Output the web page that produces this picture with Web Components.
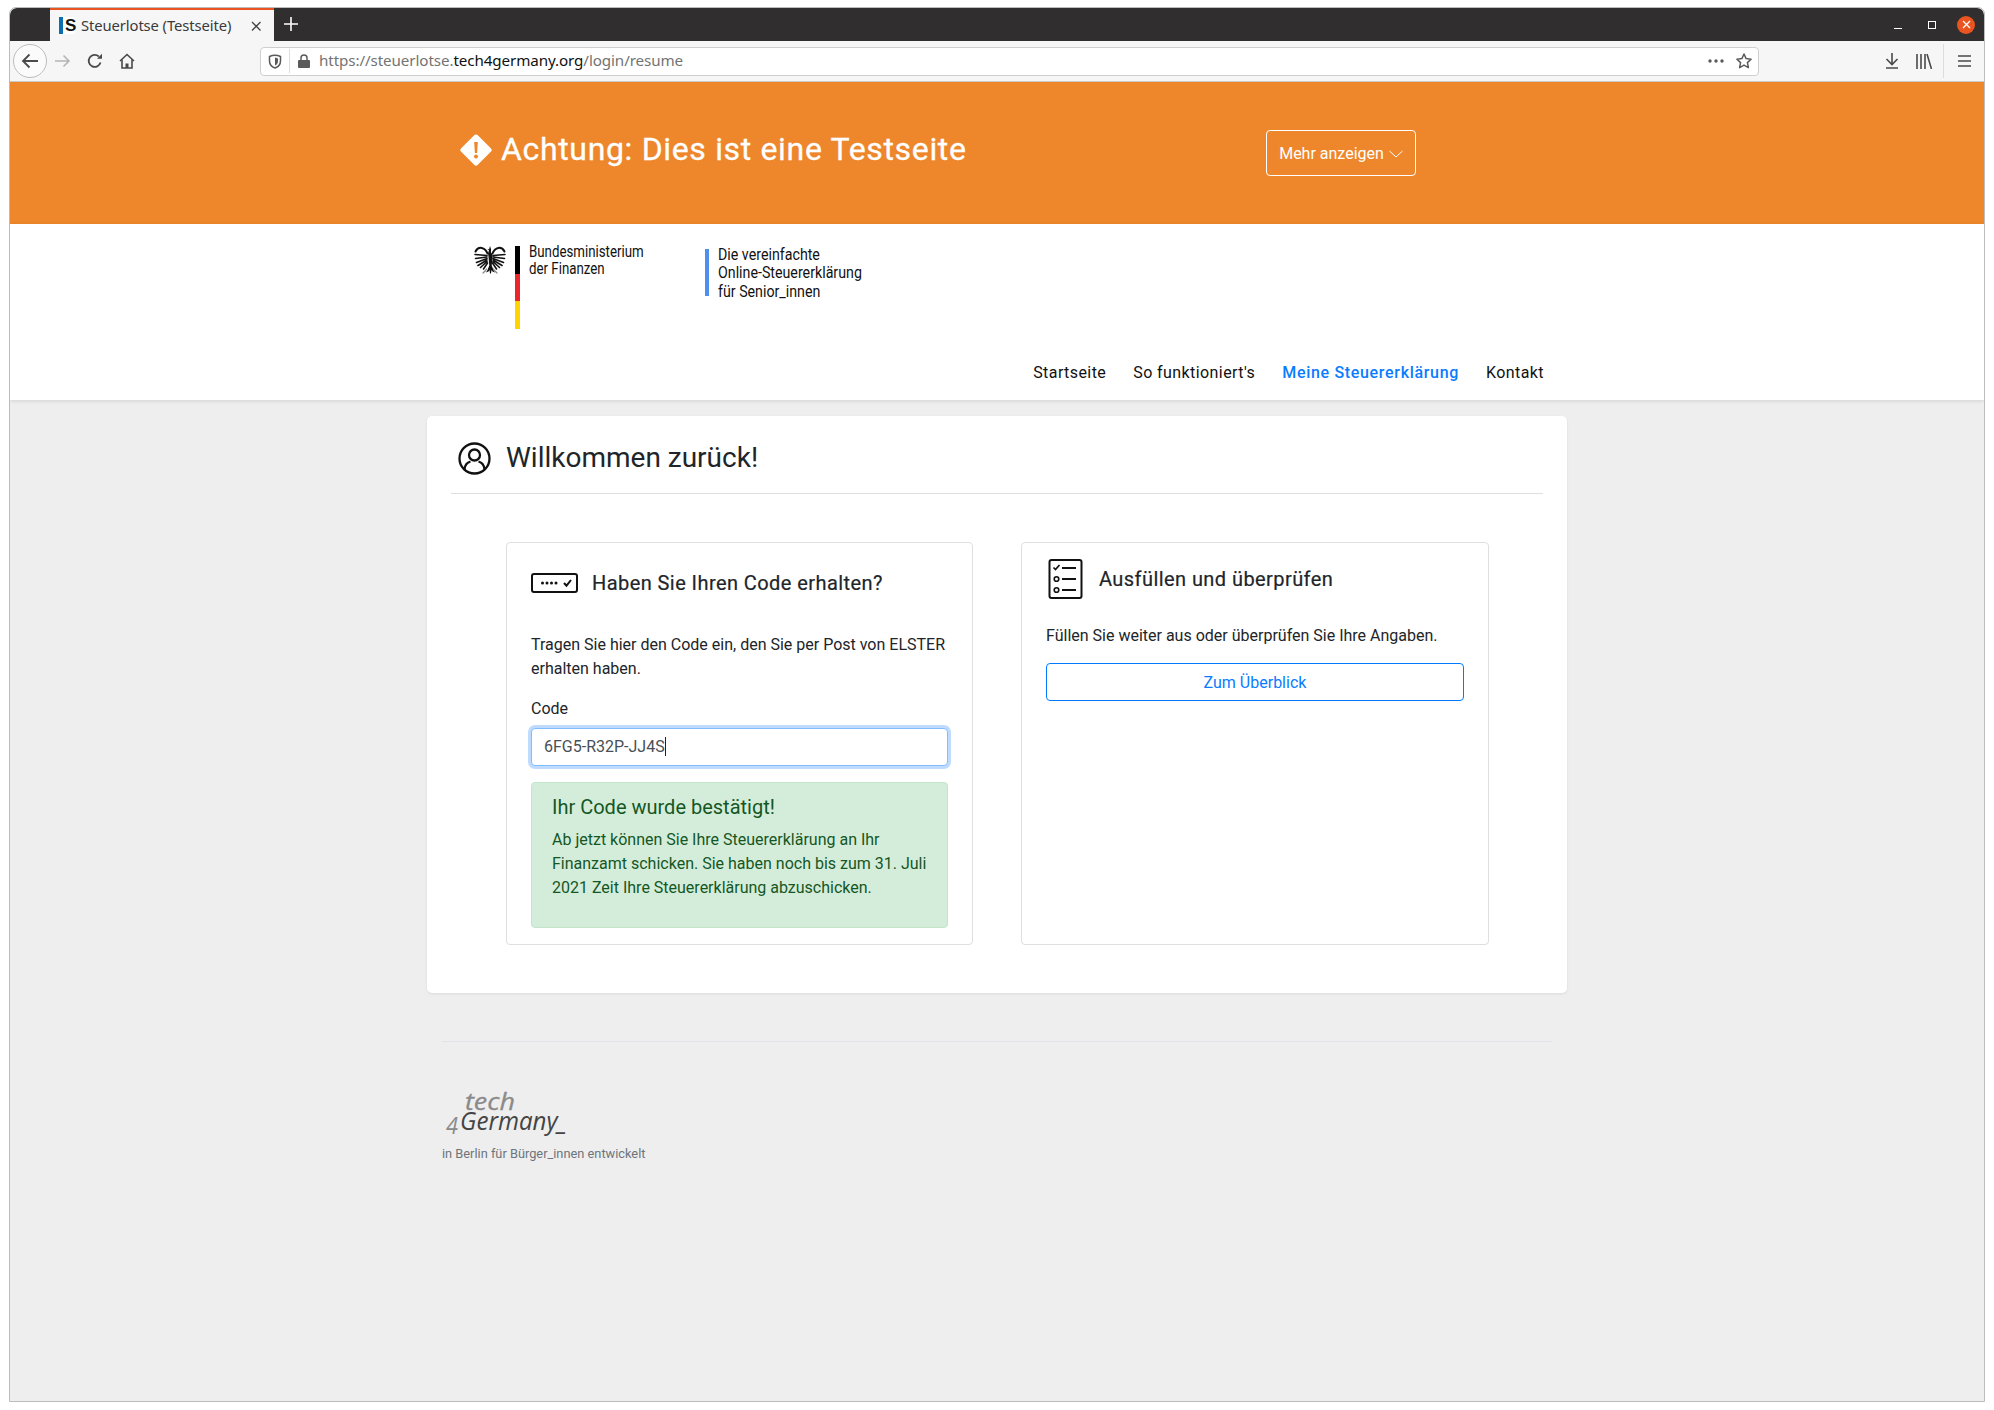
<!DOCTYPE html>
<html lang="de">
<head>
<meta charset="utf-8">
<title>Steuerlotse (Testseite)</title>
<style>
  html, body { margin: 0; background: #fff; }
  body { font-family: Roboto, "Liberation Sans", sans-serif; font-size: 16px; color: #212529; }
</style>
</head>
<body>

<browser-window>
  <test-banner></test-banner>
  <site-header></site-header>
  <welcome-card>
    <code-card></code-card>
    <review-card></review-card>
  </welcome-card>
  <site-footer></site-footer>
</browser-window>

<script>
// small helper: every element gets an open shadow root from its html
class ShadowEl extends HTMLElement {
  constructor() {
    super();
    this.attachShadow({ mode: 'open' }).innerHTML = this.constructor.html;
  }
}

// ---- browser chrome ----
class BrowserTabs extends ShadowEl {
  static html = `
    <style>
      :host { display: flex; height: 33px; background: #302e2e; padding-left: 40px; border-radius: 7px 7px 0 0; }
      .tab { width: 224px; box-sizing: border-box; background: #f6f6f6; border-top: 2px solid #e95420; display: flex; align-items: center; padding-left: 9px; color: #3a3a3a; font: 14.8px/1 "Noto Sans", sans-serif; }
      .fav { width: 16px; height: 17px; display: flex; background: #fff; margin-right: 6px; flex: none; font: 700 17px/17px "Liberation Sans", sans-serif; color: #111; }
      .fav i { width: 4px; height: 17px; background: #0a6eb0; margin-right: 2px; flex: none; }
      .title { width: 169px; flex: none; white-space: nowrap; letter-spacing: -.1px; }
      .x { width: 12px; height: 12px; flex: none; }
      .plus { margin: 9px 0 0 10px; width: 14px; height: 14px; }
      .win { margin-left: auto; display: flex; align-items: center; gap: 0; color: #fff; }
      .btn { width: 34px; height: 33px; display: flex; align-items: center; justify-content: center; }
      .close { width: 18px; height: 18px; border-radius: 50%; background: #e95420; display: flex; align-items: center; justify-content: center; margin: 0 9px 0 8px; }
    </style>
    <div class="tab">
      <span class="fav"><i></i>S</span>
      <span class="title">Steuerlotse (Testseite)</span>
      <svg class="x" viewBox="0 0 12 12" stroke="#444" stroke-width="1.3" fill="none"><path d="M2 2l8.5 8.5M10.5 2L2 10.5"/></svg>
    </div>
    <svg class="plus" viewBox="0 0 14 14" stroke="#fff" stroke-width="1.6" fill="none"><path d="M7 0v14M0 7h14"/></svg>
    <div class="win">
      <span class="btn"><svg width="8" height="8" viewBox="0 0 8 8" stroke="#fff" fill="none"><path d="M0 7.5h8"/></svg></span>
      <span class="btn"><svg width="8" height="8" viewBox="0 0 8 8" stroke="#fff" fill="none"><rect x=".5" y=".5" width="7" height="7"/></svg></span>
      <span class="close"><svg width="9" height="9" viewBox="0 0 9 9" stroke="#fff" stroke-width="1.3" fill="none"><path d="M1 1l7 7M8 1L1 8"/></svg></span>
    </div>
  `;
}
customElements.define('browser-tabs', BrowserTabs);

class BrowserToolbar extends ShadowEl {
  static html = `
    <style>
      :host { display: flex; align-items: center; height: 41px; background: #f6f6f6; border-bottom: 1px solid #c9c9c9; box-sizing: border-box; position: relative; }
      svg { display: block; flex: none; }
      .back { width: 34px; height: 34px; box-sizing: border-box; border: 1px solid #bdbdbd; border-radius: 50%; background: #fbfbfb; margin-left: 3px; display: flex; align-items: center; justify-content: center; flex: none; }
      .fwd { margin: 0 0 0 8px; }
      .reload { margin-left: 16px; }
      .home { margin-left: 16px; }
      .url { width: 1499px; height: 29px; box-sizing: border-box; margin-left: 125px; background: #fff; border: 1px solid #cfcfcf; border-radius: 4px; display: flex; align-items: center; padding-left: 7px; font: 15.2px/1 "Noto Sans", sans-serif; color: #737373; }
      .url .sep { width: 1px; height: 24px; background: #ddd; margin: 0 8px 0 7px; }
      .url .txt { margin-left: 9px; white-space: nowrap; letter-spacing: -.1px; }
      .url b { font-weight: 400; color: #111; }
      .dots { margin-left: auto; margin-right: 12px; }
      .star { margin-right: 6px; }
      .dl { margin-left: 126px; }
      .lib { margin-left: 17px; }
      .tsep { width: 1px; height: 34px; background: #ddd; margin-left: 11px; flex: none; }
      .ham { margin-left: 14px; }
    </style>
    <span class="back"><svg width="18" height="16" viewBox="0 0 18 16" fill="none" stroke="#4a4a4a" stroke-width="1.8"><path d="M17 8H2M8.5 1.5L2 8l6.5 6.5"/></svg></span>
    <svg class="fwd" width="16" height="14" viewBox="0 0 16 14" fill="none" stroke="#b5b5b5" stroke-width="1.6"><path d="M0 7h14M8.5 1.5L14 7l-5.500 5.500"/></svg>
    <svg class="reload" width="16" height="16" viewBox="0 0 16 16" fill="none" stroke="#4a4a4a" stroke-width="1.8"><path d="M13.500 9.500A6 6 0 1 1 11.800 3.500"/><path d="M10 5.800h5V.8z" fill="#4a4a4a" stroke="none"/></svg>
    <svg class="home" width="16" height="16" viewBox="0 0 16 16" fill="none" stroke="#4a4a4a" stroke-width="1.6"><path d="M1 8l7-6.500L15 8"/><path d="M3 6.500V15h10V6.500"/><path d="M6.500 15v-4.500h3V15" fill="#4a4a4a" stroke="none"/></svg>
    <div class="url">
      <svg width="14" height="15" viewBox="0 0 14 15" fill="none" stroke="#5a5a5a" stroke-width="1.500"><path d="M1.500 2.500Q7 .2 12.500 2.500V7q0 5-5.500 7Q1.500 12 1.500 7z"/><path d="M7 3.500Q9 3.800 10 4.500V7q0 3-3 4.500z" fill="#5a5a5a" stroke="none"/></svg>
      <span class="sep"></span>
      <svg width="12" height="14" viewBox="0 0 12 14" fill="#5a5a5a"><path d="M1 6h10a1 1 0 0 1 1 1v6a1 1 0 0 1-1 1H1a1 1 0 0 1-1-1V7a1 1 0 0 1 1-1z"/><path d="M3 6V4a3 3 0 0 1 6 0v2" fill="none" stroke="#5a5a5a" stroke-width="1.500"/></svg>
      <span class="txt">https://steuerlotse.<b>tech4germany.org</b>/login/resume</span>
      <svg class="dots" width="16" height="4" viewBox="0 0 16 4" fill="#5a5a5a"><circle cx="2" cy="2" r="1.700"/><circle cx="8" cy="2" r="1.700"/><circle cx="14" cy="2" r="1.700"/></svg>
      <svg class="star" width="16" height="16" viewBox="0 0 16 16" fill="none" stroke="#5a5a5a" stroke-width="1.500" stroke-linejoin="round"><path d="M8 1l2.100 4.600 5 .6-3.700 3.400 1 5L8 12.100 3.600 14.600l1-5L.9 6.200l5-.6z"/></svg>
    </div>
    <svg class="dl" width="14" height="16" viewBox="0 0 14 16" fill="none" stroke="#4a4a4a" stroke-width="1.600"><path d="M7 0v11M1.500 6L7 11.500 12.500 6M1 15h12"/></svg>
    <svg class="lib" width="16" height="15" viewBox="0 0 16 15" fill="none" stroke="#4a4a4a" stroke-width="1.600"><path d="M1 0v15M5 0v15M9 0v15M11 0l4.500 15"/></svg>
    <span class="tsep"></span>
    <svg class="ham" width="13" height="12" viewBox="0 0 13 12" stroke="#4a4a4a" stroke-width="1.600"><path d="M0 1h13M0 6h13M0 11h13"/></svg>
  `;
}
customElements.define('browser-toolbar', BrowserToolbar);

class BrowserWindow extends ShadowEl {
  static html = `
    <style>
      :host { display: flex; flex-direction: column; box-sizing: border-box; margin: 7px 9px 0 9px; height: 1395px; background: #eee; border: 1px solid #bcbcbc; border-radius: 7px 7px 0 0; overflow: hidden; }
    </style>
    <browser-tabs></browser-tabs>
    <browser-toolbar></browser-toolbar>
    <slot></slot>
  `;
}

// ---- page ----
class TestBanner extends ShadowEl {
  static html = `
    <style>
      :host { display: block; height: 142px; background: #ee872b; color: #fff; }
      .wrap { width: 1140px; margin: 0 auto; display: flex; align-items: flex-start; box-sizing: border-box; padding-left: 33px; }
      svg { margin-top: 52px; flex: none; }
      h1 { margin: 43px 0 0 9px; font: 400 32px/48px Roboto, sans-serif; letter-spacing: .66px; -webkit-text-stroke: .3px #fff; width: 765px; white-space: nowrap; }
      button { margin-top: 48px; width: 150px; height: 46px; box-sizing: border-box; background: transparent; border: 1px solid #fff; border-radius: 4px; color: #fff; font: 400 16px/1 Roboto, sans-serif; display: flex; align-items: center; justify-content: center; gap: 5px; padding: 2px 0 0; }
    </style>
    <div class="wrap">
      <svg width="32" height="32" viewBox="0 0 32 32"><path d="M16 0.500a2.500 2.500 0 0 1 1.800.7l13 13a2.500 2.500 0 0 1 0 3.600l-13 13a2.500 2.500 0 0 1-3.600 0l-13-13a2.500 2.500 0 0 1 0-3.600l13-13a2.500 2.500 0 0 1 1.800-.7z" fill="#fff"/><path d="M14.200 8h3.600l-.7 11h-2.200z" fill="#ee872b"/><circle cx="16" cy="22.500" r="2" fill="#ee872b"/></svg>
      <h1>Achtung: Dies ist eine Testseite</h1>
      <button>Mehr anzeigen <svg style="margin:0" width="14" height="8" viewBox="0 0 14 8" fill="none" stroke="#fff"><path d="M.5 1L7 7l6.500-6"/></svg></button>
    </div>
  `;
}

class SiteHeader extends ShadowEl {
  static html = `
    <style>
      :host { display: block; height: 176px; background: #fff; box-shadow: 0 1px 4px rgba(0,0,0,.12); position: relative; }
      .wrap { width: 1140px; margin: 0 auto; }
      .logos { display: flex; align-items: flex-start; height: 137px; padding-left: 47px; box-sizing: border-box; }
      .eagle { margin-top: 20px; flex: none; }
      .flag { width: 5px; height: 83px; margin: 22px 0 0 9px; background: linear-gradient(#000 0 33.3%, #e8262c 33.3% 66.6%, #ffd400 66.6%); flex: none; }
      .cond { font: 400 16px Roboto, sans-serif; color: #111; transform-origin: 0 0; white-space: nowrap; }
      .bmf { margin: 19px 0 0 9px; line-height: 17px; width: 176px; transform: scaleX(.83); }
      .slogan { display: flex; margin-top: 25px; }
      .slogan i { width: 4px; height: 47px; background: #4f8ff0; flex: none; }
      .slogan .cond { margin: -3px 0 0 9px; line-height: 18.400px; transform: scaleX(.889); }
      nav { display: flex; justify-content: flex-end; gap: 27px; padding-right: 23px; font-size: 16px; letter-spacing: .42px; line-height: 24px; }
      nav a { color: #111; }
      nav a.on { color: #0a7cff; font-weight: 500; letter-spacing: .68px; }
    </style>
    <div class="wrap">
      <div class="logos">
        <svg class="eagle" width="32" height="32" viewBox="0 0 32 32" fill="#111" stroke="#111">
          <path d="M14 9.500l1-3.500-1.800-.6 2-.4.8-3 1 3v3.800l1 .7.500 3-.8 9 1.800 4.500 1.500 2.500-2.500-1-1-1.500-.5 3.500h-1l-.5-3.500-1 1.500-2.500 1 1.500-2.500 1.800-4.500-.8-9z" stroke="none"/>
          <g fill="none" stroke-linecap="round">
            <path d="M13.500 9.500C11 3 4.500 1.800 1.500 7.500" stroke-width="2"/>
            <path d="M13 11.500L1 10.500M13 13L1.500 14.500M13 14.500L2.500 18.500M13 16L4 21.500M13 17.500L6.500 23.500M13.500 19L9.500 25" stroke-width="1.600"/>
            <path d="M18.500 9.500C21 3 27.500 1.800 30.500 7.500" stroke-width="2"/>
            <path d="M19 11.500L31 10.500M19 13L30.500 14.500M19 14.500L29.500 18.500M19 16L28 21.500M19 17.500L25.500 23.500M18.500 19L22.500 25" stroke-width="1.600"/>
            <path d="M11 27.500l1.500-2.500M21 27.500l-1.500-2.500M9 29l2-2M23 29l-2-2" stroke="#888" stroke-width="1.200"/>
          </g>
        </svg>
        <span class="flag"></span>
        <div class="cond bmf">Bundesministerium<br>der Finanzen</div>
        <div class="slogan"><i></i><div class="cond">Die vereinfachte<br>Online-Steuererklärung<br>für Senior_innen</div></div>
      </div>
      <nav>
        <a>Startseite</a><a>So funktioniert's</a><a class="on">Meine Steuererklärung</a><a>Kontakt</a>
      </nav>
    </div>
  `;
}

class WelcomeCard extends ShadowEl {
  static html = `
    <style>
      :host { display: block; width: 1140px; height: 577px; margin: 16px auto 0; box-sizing: border-box; background: #fff; border-radius: 5px; box-shadow: 0 1px 3px rgba(0,0,0,.08); padding: 0 24px; }
      header { display: flex; align-items: center; height: 78px; border-bottom: 1px solid #dfdfdf; padding: 7px 0 0 7px; box-sizing: border-box; }
      h2 { margin: 0 0 0 15px; font: 400 28px/34px Roboto, sans-serif; color: #212529; }
      svg { display: block; flex: none; }
      .cols { display: grid; grid-template-columns: 467px 468px; gap: 48px; padding: 48px 54px 0 55px; }
    </style>
    <header>
      <svg width="33" height="33" viewBox="0 0 33 33" fill="none" stroke="#111" stroke-width="2.300"><circle cx="16.500" cy="16.500" r="15"/><circle cx="16.500" cy="13" r="5.500"/><path d="M6.500 27.500Q7 21 12.500 19.500M26.500 27.500Q26 21 20.500 19.500"/></svg>
      <h2>Willkommen zurück!</h2>
    </header>
    <div class="cols"><slot></slot></div>
  `;
}

class SubCard extends ShadowEl {
  static html = `
    <style>
      :host { display: block; height: 403px; box-sizing: border-box; background: #fff; border: 1px solid #dfdfdf; border-radius: 4px; padding: 16px 24px 0; line-height: 24px; }
      .head { display: flex; align-items: center; }
      h3 { margin: 0; font: 400 20px/24px Roboto, sans-serif; letter-spacing: .43px; -webkit-text-stroke: .2px #212529; color: #212529; white-space: nowrap; }
      svg { display: block; flex: none; }
      ::slotted(*) { display: block; }
    </style>
    <div class="head"><slot name="icon"></slot><h3><slot name="title"></slot></h3></div>
    <slot></slot>
  `;
}

class CodeCard extends ShadowEl {
  static html = `
    <style>
      :host { display: block; }
      svg { display: block; margin: 0; }
      [slot=title] { margin-left: 14px; }
      .ico { margin: 12px 0 0; }
      p { margin: 38px 0 0; }
      label { display: block; margin-top: 16px; line-height: 24px; }
      .input { margin-top: 7px; height: 38px; box-sizing: border-box; background: #fff; border: 1px solid #80bdff; border-radius: 4px; box-shadow: 0 0 0 3px #bfdcff; padding-left: 12px; color: #495057; line-height: 36px; white-space: nowrap; }
      .input i { display: inline-block; width: 1px; height: 19px; background: #222; vertical-align: -4px; }
      alert-box { margin-top: 16px; }
    </style>
    <sub-card>
      <svg slot="icon" class="ico" width="47" height="20" viewBox="0 0 47 20" fill="none" stroke="#111"><rect x="1" y="1" width="45" height="18" rx="2" stroke-width="2"/><g fill="#111" stroke="none"><circle cx="11.500" cy="10" r="1.500"/><circle cx="16" cy="10" r="1.500"/><circle cx="20.500" cy="10" r="1.500"/><circle cx="25" cy="10" r="1.500"/></g><path d="M33 10l2.500 2.700L40 7" stroke-width="2"/></svg>
      <span slot="title" style="margin-top:12px">Haben Sie Ihren Code erhalten?</span>
      <div>
        <p>Tragen Sie hier den Code ein, den Sie per Post von ELSTER erhalten haben.</p>
        <label>Code</label>
        <div class="input">6FG5-R32P-JJ4S<i></i></div>
        <alert-box></alert-box>
      </div>
    </sub-card>
  `;
}

class AlertBox extends ShadowEl {
  static html = `
    <style>
      :host { display: block; box-sizing: border-box; height: 146px; background: #d4edda; border: 1px solid #c3e6cb; border-radius: 4px; color: #155724; padding: 12px 20px; }
      h4 { margin: 0 0 9px; font: 400 20px/24px Roboto, sans-serif; }
      p { margin: 0; line-height: 24px; }
    </style>
    <h4>Ihr Code wurde bestätigt!</h4>
    <p>Ab jetzt können Sie Ihre Steuererklärung an Ihr Finanzamt schicken. Sie haben noch bis zum 31. Juli 2021 Zeit Ihre Steuererklärung abzuschicken.</p>
  `;
}

class ReviewCard extends ShadowEl {
  static html = `
    <style>
      :host { display: block; }
      .ico { margin-left: 2px; }
      [slot=title] { margin-left: 16px; margin-top: -1px; }
      p { margin: 25px 0 0; }
      .btn { display: block; margin-top: 15px; width: 418px; height: 38px; box-sizing: border-box; border: 1.500px solid #007bff; border-radius: 4px; color: #0a7cff; text-align: center; line-height: 38px; }
    </style>
    <sub-card>
      <svg slot="icon" class="ico" width="35" height="40" viewBox="0 0 35 40" fill="none" stroke="#111" stroke-width="2"><rect x="1.500" y="1" width="32" height="38" rx="2"/><path d="M5.500 8.500l2 2L11.500 6" stroke-width="1.700"/><path d="M14 9h14M14 20h14M14 31h14" /><circle cx="8.500" cy="20" r="2.300" stroke-width="1.600"/><circle cx="8.500" cy="31" r="2.300" stroke-width="1.600"/></svg>
      <span slot="title">Ausfüllen und überprüfen</span>
      <div>
        <p>Füllen Sie weiter aus oder überprüfen Sie Ihre Angaben.</p>
        <a class="btn">Zum Überblick</a>
      </div>
    </sub-card>
  `;
}

class SiteFooter extends ShadowEl {
  static html = `
    <style>
      :host { display: block; width: 1110px; margin: 48px auto 0; border-top: 1px solid #e1e3e8; }
      svg { display: block; margin-top: 35px; }
      text { font-family: "Open Sans", sans-serif; font-style: italic; }
      small { display: block; margin-top: .5px; font-size: 12.800px; line-height: 20px; color: #6c757d; }
    </style>
    <svg width="140" height="66" viewBox="0 0 140 66">
      <text x="23" y="33" font-size="24" fill="#8a8a8a" stroke="#8a8a8a" stroke-width=".3" textLength="50" lengthAdjust="spacingAndGlyphs">tech</text>
      <text x="4" y="57" font-size="24" fill="#8a8a8a" textLength="12" lengthAdjust="spacingAndGlyphs">4</text>
      <text x="18" y="53" font-size="26" fill="#444" textLength="107" lengthAdjust="spacingAndGlyphs">Germany_</text>
    </svg>
    <small>in Berlin für Bürger_innen entwickelt</small>
  `;
}

customElements.define('alert-box', AlertBox);
customElements.define('sub-card', SubCard);
customElements.define('test-banner', TestBanner);
customElements.define('site-header', SiteHeader);
customElements.define('welcome-card', WelcomeCard);
customElements.define('code-card', CodeCard);
customElements.define('review-card', ReviewCard);
customElements.define('site-footer', SiteFooter);
customElements.define('browser-window', BrowserWindow);
</script>
</body>
</html>
